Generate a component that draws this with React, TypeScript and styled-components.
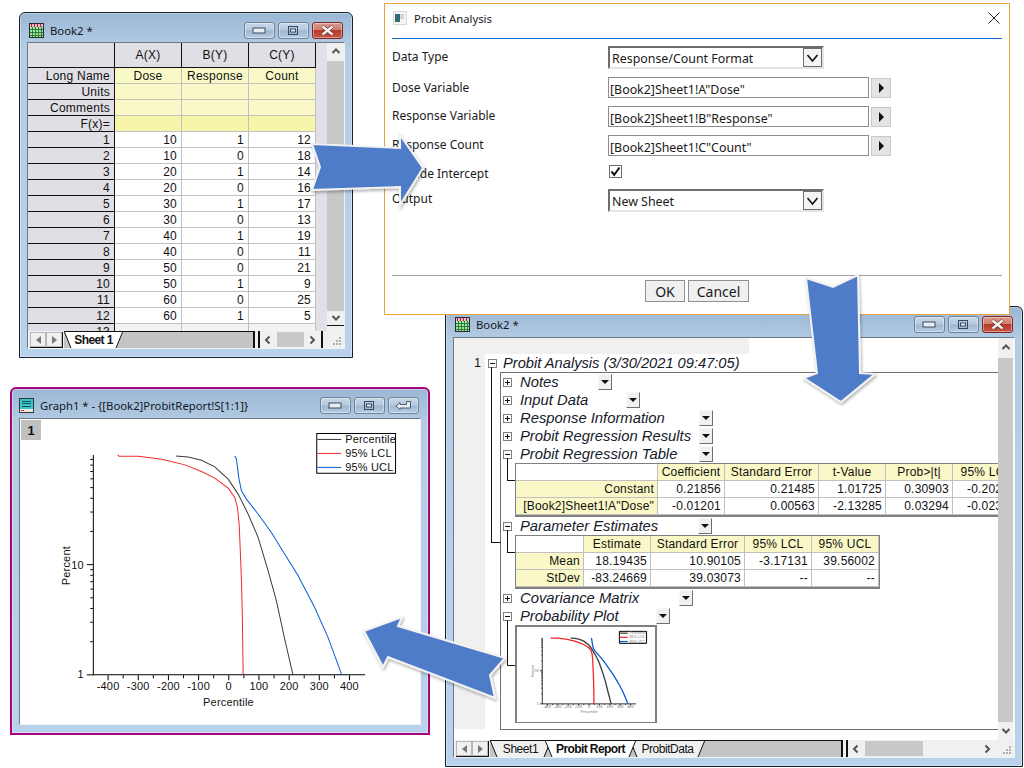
import React from "react";
import styled, { createGlobalStyle, css } from "styled-components";

const SANS = `"Liberation Sans", Arial, sans-serif`;
const UI = `"Noto Sans", "Open Sans", sans-serif`;

const Global = createGlobalStyle`
  html, body { margin: 0; padding: 0; background: #fff; overflow: hidden; }
  #root { width: 1024px; height: 768px; position: relative; overflow: hidden; }
  * { box-sizing: border-box; }
`;

/* ---------- window chrome ---------- */
const Desktop = styled.div`
  position: relative;
  width: 1024px;
  height: 768px;
  background: #fff;
`;
const Win = styled.section<{ $x: number; $y: number; $w: number; $h: number; $edge: string; $bw: number }>`
  position: absolute;
  left: ${(p) => p.$x}px;
  top: ${(p) => p.$y}px;
  width: ${(p) => p.$w}px;
  height: ${(p) => p.$h}px;
  border: ${(p) => p.$bw}px solid ${(p) => p.$edge};
  border-radius: 6px 6px 0 0;
  background: linear-gradient(#9bb7d4 0, #b4cce4 34px, #b9d1ea 100%);
  display: flex;
  flex-direction: column;
  padding: 0 7px 8px;
  box-shadow: inset 0 0 0 1px rgba(255, 255, 255, 0.35);
`;
const TitleBar = styled.header<{ $h: number; $top: number; $left: number }>`
  height: ${(p) => p.$h}px;
  flex: none;
  display: flex;
  align-items: center;
  gap: 6px;
  padding-top: ${(p) => p.$top}px;
  padding-left: ${(p) => p.$left}px;
  color: #10181f;
  font: 11.3px ${UI};
`;
const TitleText = styled.span`
  flex: 1;
  white-space: nowrap;
`;
const WinButtons = styled.div`
  display: flex;
  gap: 3px;
  margin-right: 2px;
`;
const WinBtn = styled.div<{ $close?: boolean }>`
  width: 31px;
  height: 17px;
  border: 1px solid ${(p) => (p.$close ? "#7a2a22" : "#6f8297")};
  border-radius: 3px;
  display: flex;
  align-items: center;
  justify-content: center;
  box-shadow: inset 0 0 0 1px rgba(255, 255, 255, 0.4);
  background: ${(p) =>
    p.$close
      ? "linear-gradient(#d99a8e 0, #cf7e70 45%, #b8382a 50%, #c4584a 100%)"
      : "linear-gradient(#c8d8e8 0, #b4c9de 48%, #9db6d0 52%, #b6cce2 100%)"};
`;
const WinInner = styled.div<{ $bg?: string }>`
  flex: 1;
  min-height: 0;
  display: flex;
  flex-direction: column;
  background: ${(p) => p.$bg ?? "#f0f0f0"};
  border: 1px solid;
  border-color: #6c7a88 #eef3f8 #eef3f8 #6c7a88;
  overflow: hidden;
`;

const MinIcon = () => (
  <svg width="15" height="7" viewBox="0 0 15 7">
    <rect x="1" y="1" width="12" height="5" fill="#e8eef4" stroke="#3c4c5c" />
  </svg>
);
const MaxIcon = () => (
  <svg width="13" height="11" viewBox="0 0 13 11">
    <rect x="1.5" y="1.5" width="9" height="8" fill="none" stroke="#34485c" strokeWidth="1" />
    <rect x="3.5" y="4" width="5" height="3" fill="#e8eef4" stroke="#34485c" strokeWidth="1" />
  </svg>
);
const CloseIcon = () => (
  <svg width="15" height="11" viewBox="0 0 15 11">
    <path d="M2.5 1.5 L12.5 9.5 M12.5 1.5 L2.5 9.5" stroke="#6a2a22" strokeWidth="3.6" />
    <path d="M2.5 1.5 L12.5 9.5 M12.5 1.5 L2.5 9.5" stroke="#f4f4f4" strokeWidth="2.4" />
  </svg>
);
const ReturnIcon = () => (
  <svg width="17" height="11" viewBox="0 0 17 11">
    <path
      d="M1 6 L5 2.5 V4.5 H11.5 V1.5 H15.5 V8 H5 V9.5 Z"
      fill="#e8eef4"
      stroke="#4a5c6e"
      strokeWidth="1"
      strokeLinejoin="round"
    />
  </svg>
);
const BookIcon = () => (
  <svg width="15" height="15" viewBox="0 0 15 15" shapeRendering="crispEdges">
    <rect x="0" y="0" width="15" height="15" fill="#2a2a2a" />
    <rect x="1" y="1" width="13" height="3" fill="#e8b8c8" />
    {[2, 5, 8, 11].map((x) => (
      <rect key={x} x={x} y="1" width="1" height="3" fill="#b0203a" />
    ))}
    <rect x="1" y="4" width="13" height="10" fill="#9fe89f" />
    {[3, 6, 9, 12].map((x) => (
      <rect key={x} x={x} y="4" width="1" height="10" fill="#2f7a3a" />
    ))}
    {[6, 9, 12].map((y) => (
      <rect key={y} x="1" y={y} width="13" height="1" fill="#2f7a3a" />
    ))}
  </svg>
);
const GraphIcon = () => (
  <svg width="15" height="15" viewBox="0 0 15 15" shapeRendering="crispEdges">
    <rect x="0" y="0" width="15" height="15" fill="#33363a" />
    <rect x="1" y="1" width="13" height="10" fill="#38c8c0" />
    <rect x="3" y="3" width="9" height="1" fill="#15506a" />
    <rect x="3" y="5" width="9" height="1" fill="#15506a" />
    <rect x="3" y="8" width="9" height="1" fill="#15506a" />
    <rect x="1" y="11" width="13" height="3" fill="#f0e8e0" />
    <rect x="2" y="12" width="3" height="1" fill="#c83030" />
  </svg>
);

/* ---------- chevrons and scrollbars ---------- */
const Chevron = ({ dir, color = "#555" }: { dir: "up" | "down" | "left" | "right"; color?: string }) => {
  const paths = {
    up: "M1.5 6 L5 2.5 L8.5 6",
    down: "M1.5 3 L5 6.5 L8.5 3",
    left: "M6.5 1.5 L3 5 L6.5 8.5",
    right: "M3.5 1.5 L7 5 L3.5 8.5",
  };
  return (
    <svg width="10" height="10" viewBox="0 0 10 10">
      <path d={paths[dir]} fill="none" stroke={color} strokeWidth="2" />
    </svg>
  );
};
const VScroll = styled.div<{ $w: number }>`
  width: ${(p) => p.$w}px;
  flex: none;
  background: #f0f0f0;
  display: flex;
  flex-direction: column;
  align-items: stretch;
`;
const ScrollEnd = styled.div<{ $h: number }>`
  height: ${(p) => p.$h}px;
  flex: none;
  display: flex;
  align-items: center;
  justify-content: center;
`;
const VThumb = styled.div`
  flex: 1;
  background: #c8c8c8;
`;

/* ---------- sheet tabs ---------- */
const TabBar = styled.div`
  height: 17px;
  flex: none;
  display: flex;
  align-items: stretch;
  background: #f0f0f0;
  font: 12px ${SANS};
  color: #111;
`;
const NavGroup = styled.div`
  flex: none;
  display: flex;
  margin: 1px 1px 0 2px;
  border-right: 1px solid #111;
  border-bottom: 1px solid #111;
`;
const NavBtn = styled.div`
  width: 16px;
  display: flex;
  align-items: center;
  justify-content: center;
  background: #f0f0f0;
  border: 1px solid;
  border-color: #fff #a0a0a0 #a0a0a0 #fff;
  outline: 1px solid #b8b8b8;
  outline-offset: -1px;
`;
const Tri = styled.span<{ $right?: boolean }>`
  width: 0;
  height: 0;
  border-top: 4px solid transparent;
  border-bottom: 4px solid transparent;
  ${(p) => (p.$right ? "border-left: 5px solid #777;" : "border-right: 5px solid #777;")}
`;
const TabStrip = styled.div<{ $end: number }>`
  flex: none;
  width: ${(p) => p.$end}px;
  display: flex;
  background: #c4c4c4;
  border-top: 1px solid #111;
  border-right: 2px solid #111;
`;
const TabItem = styled.div<{ $w: number; $active?: boolean }>`
  position: relative;
  flex: none;
  width: ${(p) => p.$w}px;
  margin-right: -6px;
  display: flex;
  align-items: center;
  justify-content: center;
  font-weight: ${(p) => (p.$active ? 700 : 400)};
  z-index: ${(p) => (p.$active ? 2 : 1)};
  letter-spacing: ${(p) => (p.$active ? "-0.6px" : "-0.45px")};
`;
const TabShape = styled.svg`
  position: absolute;
  inset: 0;
  width: 100%;
  height: 100%;
`;
const TabLabel = styled.span`
  position: relative;
`;
const Tab = ({ w, active, children }: { w: number; active?: boolean; children: React.ReactNode }) => (
  <TabItem $w={w} $active={active}>
    <TabShape viewBox={`0 0 ${w} 16`} preserveAspectRatio="none">
      <path d={`M0 -1 L7 16 H${w - 7} L${w} -1 Z`} fill={active ? "#fff" : "#f0f0f0"} stroke="none" />
      <path d={`M0 -1 L7 16 M${w - 7} 16 L${w} -1`} fill="none" stroke="#111" strokeWidth="1" />
    </TabShape>
    <TabLabel>{children}</TabLabel>
  </TabItem>
);
const HScroll = styled.div<{ $w: number; $closed?: boolean }>`
  flex: none;
  width: ${(p) => p.$w}px;
  margin-left: 3px;
  border-left: 2px solid #111;
  border-right: 2px solid ${(p) => (p.$closed ? "#111" : "transparent")};
  display: flex;
  align-items: center;
  justify-content: space-between;
  padding: 0 4px 0 3px;
`;
const HThumb = styled.div<{ $w: number; $after: number }>`
  width: ${(p) => p.$w}px;
  height: 15px;
  background: #c8c8c8;
  margin-right: ${(p) => p.$after}px;
`;
const Grip = styled.div`
  flex: 1;
  display: flex;
  align-items: flex-end;
  justify-content: flex-end;
  padding: 0 2px 2px 0;
`;
const GripIcon = () => (
  <svg width="10" height="10" viewBox="0 0 10 10" shapeRendering="crispEdges">
    {[
      [7, 1],
      [4, 4],
      [7, 4],
      [1, 7],
      [4, 7],
      [7, 7],
    ].map(([x, y]) => (
      <rect key={`${x}-${y}`} x={x} y={y} width="2" height="2" fill="#b0b0b0" />
    ))}
  </svg>
);

/* ---------- worksheet ---------- */
const SheetRow = styled.div`
  flex: 1;
  min-height: 0;
  display: flex;
`;
const Sheet = styled.div`
  width: 288px;
  flex: none;
  display: grid;
  grid-template-columns: 87px 67px 67px 67px;
  grid-auto-rows: 16px;
  grid-template-rows: 25px;
  overflow: hidden;
  background: #f3f3f3;
  font: 12px ${SANS};
  letter-spacing: 0.25px;
  color: #111;
`;
type Kind = "corner" | "col" | "row" | "meta" | "data";
const kindStyles: Record<Kind, ReturnType<typeof css>> = {
  corner: css`
    background: #dfdfe5;
    border-right: 1px solid #111;
    border-bottom: 1px solid #111;
  `,
  col: css`
    background: #dfdfe5;
    border-right: 1px solid #111;
    border-bottom: 1px solid #111;
    justify-content: center;
  `,
  row: css`
    background: #dfdfe5;
    border-right: 1px solid #111;
    border-bottom: 1px solid #111;
    justify-content: flex-end;
    padding-right: 4px;
  `,
  meta: css`
    border-right: 1px solid #c0c0c0;
    border-bottom: 1px solid #c0c0c0;
    justify-content: center;
  `,
  data: css`
    background: #fff;
    border-right: 1px solid #c0c0c0;
    border-bottom: 1px solid #c0c0c0;
    justify-content: flex-end;
    padding-right: 4px;
  `,
};
const SheetCell = styled.div<{ $kind: Kind; $tint?: string }>`
  display: flex;
  align-items: center;
  white-space: nowrap;
  ${(p) => kindStyles[p.$kind]}
  ${(p) => p.$tint && `background: ${p.$tint};`}
`;
const SheetGutter = styled.div`
  width: 11px;
  flex: none;
  background: #e0e0e6;
`;
const BottomRule = styled.div`
  height: 1px;
  background: #111;
  flex: none;
  margin-bottom: 5px;
`;

const META: [string, string[], string][] = [
  ["Long Name", ["Dose", "Response", "Count"], "#f9f9c8"],
  ["Units", ["", "", ""], "#f9f8c6"],
  ["Comments", ["", "", ""], "#f9f8c6"],
  ["F(x)=", ["", "", ""], "#f7f5a9"],
];
const DATA = [
  [10, 1, 12],
  [10, 0, 18],
  [20, 1, 14],
  [20, 0, 16],
  [30, 1, 17],
  [30, 0, 13],
  [40, 1, 19],
  [40, 0, 11],
  [50, 0, 21],
  [50, 1, 9],
  [60, 0, 25],
  [60, 1, 5],
];

const BookWindow = () => (
  <Win $x={19} $y={12} $w={334} $h={346} $edge="#16222c" $bw={1}>
    <TitleBar $h={29} $top={6} $left={2}>
      <BookIcon />
      <TitleText>Book2 *</TitleText>
      <WinButtons>
        <WinBtn>
          <MinIcon />
        </WinBtn>
        <WinBtn>
          <MaxIcon />
        </WinBtn>
        <WinBtn $close>
          <CloseIcon />
        </WinBtn>
      </WinButtons>
    </TitleBar>
    <WinInner>
      <SheetRow>
        <Sheet>
          <SheetCell $kind="corner" />
          {["A(X)", "B(Y)", "C(Y)"].map((c) => (
            <SheetCell key={c} $kind="col">
              {c}
            </SheetCell>
          ))}
          {META.map(([name, vals, tint]) => (
            <React.Fragment key={name}>
              <SheetCell $kind="row">{name}</SheetCell>
              {vals.map((v, i) => (
                <SheetCell key={i} $kind="meta" $tint={tint}>
                  {v}
                </SheetCell>
              ))}
            </React.Fragment>
          ))}
          {DATA.map((r, i) => (
            <React.Fragment key={i}>
              <SheetCell $kind="row">{i + 1}</SheetCell>
              {r.map((v, j) => (
                <SheetCell key={j} $kind="data">
                  {v}
                </SheetCell>
              ))}
            </React.Fragment>
          ))}
          <SheetCell $kind="row">13</SheetCell>
          {[0, 1, 2].map((j) => (
            <SheetCell key={j} $kind="data" $tint="#f3f3f3" />
          ))}
        </Sheet>
        <SheetGutter />
        <VScroll $w={18}>
          <ScrollEnd $h={18}>
            <Chevron dir="up" />
          </ScrollEnd>
          <VThumb />
          <ScrollEnd $h={14}>
            <Chevron dir="down" />
          </ScrollEnd>
          <BottomRule />
        </VScroll>
      </SheetRow>
      <TabBar>
        <NavGroup>
          <NavBtn>
            <Tri />
          </NavBtn>
          <NavBtn>
            <Tri $right />
          </NavBtn>
        </NavGroup>
        <TabStrip $end={191}>
          <Tab w={59} active>
            Sheet 1
          </Tab>
        </TabStrip>
        <HScroll $w={65} $closed>
          <Chevron dir="left" />
          <HThumb $w={27} $after={0} />
          <Chevron dir="right" />
        </HScroll>
        <Grip>
          <GripIcon />
        </Grip>
      </TabBar>
    </WinInner>
  </Win>
);

/* ---------- plot (shared by the graph window and the thumbnail) ---------- */
const PCT = "523,225 560,228 600,238 640,258 680,295 710,340 740,400 770,470 800,570 825,660 850,775 875,884";
const LCL =
  "348,222 352,226 410,226 480,235 550,252 600,272 640,292 680,322 700,350 708,380 713,430 716,500 720,600 723,720 725,884";
const UCL = "700,225 705,235 712,290 720,330 735,355 770,400 810,455 850,520 890,585 940,680 980,770 1022,884";
const conv = (s: string) =>
  s
    .split(" ")
    .map((p) => {
      const [x, y] = p.split(",").map(Number);
      return `${(x / 3).toFixed(1)},${(380 + y / 3).toFixed(1)}`;
    })
    .join(" ");
const xAt = (v: number) => 227.3 + 0.3025 * v;
const yAt = (d: number) => 674.5 - 110.5 * Math.log10(d);

const Plot = ({ weight }: { weight: number }) => {
  const minorY: number[] = [];
  [1, 10].forEach((m) => [2, 3, 4, 5, 6, 7, 8, 9].forEach((k) => minorY.push(m * k)));
  const ne = { vectorEffect: "non-scaling-stroke" as const };
  const label = {
    fontFamily: SANS,
    fontSize: 11,
    letterSpacing: 0.2,
    fill: weight > 1 ? "#777" : "#111",
  };
  return (
    <>
      <g stroke="#000" strokeWidth={weight > 1 ? 0.8 : 1} fill="none" {...ne}>
        <line x1="91.5" y1="454" x2="91.5" y2="675" {...ne} />
        <line x1="91" y1="674.5" x2="364" y2="674.5" {...ne} />
        {[1, 10].map((d) => (
          <line key={d} x1="85" x2="91" y1={yAt(d)} y2={yAt(d)} {...ne} />
        ))}
        {minorY.map((d) => (
          <line key={d} x1="88.5" x2="91" y1={yAt(d)} y2={yAt(d)} {...ne} />
        ))}
        {[-400, -300, -200, -100, 0, 100, 200, 300, 400].map((v) => (
          <line key={v} y1="675" y2="680" x1={xAt(v)} x2={xAt(v)} {...ne} />
        ))}
        {[-350, -250, -150, -50, 50, 150, 250, 350].map((v) => (
          <line key={v} y1="675" y2="678" x1={xAt(v)} x2={xAt(v)} {...ne} />
        ))}
      </g>
      <g fill="none" strokeWidth={weight}>
        <polyline points={conv(PCT)} stroke="#3c3c3c" {...ne} />
        <polyline points={conv(LCL)} stroke="#f02828" {...ne} />
        <polyline points={conv(UCL)} stroke="#0a5ad8" {...ne} />
      </g>
      <g {...label}>
        {[-400, -300, -200, -100, 0, 100, 200, 300, 400].map((v) => (
          <text key={v} x={xAt(v)} y="689.5" textAnchor="middle">
            {v}
          </text>
        ))}
        <text x="227" y="706" textAnchor="middle">
          Percentile
        </text>
        <text x="82" y="568" textAnchor="end">
          10
        </text>
        <text x="82" y="678" textAnchor="end">
          1
        </text>
        <text transform="translate(68 565) rotate(-90)" textAnchor="middle">
          Percent
        </text>
      </g>
      <rect x="315.5" y="432.5" width="79" height="40" fill="#fff" stroke="#000" strokeWidth={1} {...ne} />
      <g strokeWidth={weight > 1 ? 1.2 : 1}>
        <line x1="316" x2="340" y1="438.5" y2="438.5" stroke="#3c3c3c" {...ne} />
        <line x1="316" x2="340" y1="452.5" y2="452.5" stroke="#f02828" {...ne} />
        <line x1="316" x2="340" y1="466.5" y2="466.5" stroke="#0a5ad8" {...ne} />
      </g>
      <g {...label}>
        <text x="344" y="442">
          Percentile
        </text>
        <text x="344" y="456">
          95% LCL
        </text>
        <text x="344" y="470">
          95% UCL
        </text>
      </g>
    </>
  );
};

const PlotSvg = styled.svg`
  display: block;
  width: 100%;
  height: 100%;
`;
const GraphPage = styled.div`
  position: relative;
  flex: 1;
  background: #fff;
`;
const LayerTag = styled.div`
  position: absolute;
  left: 1px;
  top: 1px;
  width: 20px;
  height: 20px;
  background: #c0c0c0;
  font: 700 13px ${SANS};
  color: #111;
  display: flex;
  align-items: center;
  justify-content: center;
`;

const GraphWindow = () => (
  <Win $x={10} $y={387} $w={420} $h={348} $edge="#a8047e" $bw={2}>
    <TitleBar $h={29} $top={4} $left={0}>
      <GraphIcon />
      <TitleText>Graph1 * - {"{[Book2]ProbitReport!S[1:1]}"}</TitleText>
      <WinButtons>
        <WinBtn>
          <MinIcon />
        </WinBtn>
        <WinBtn>
          <MaxIcon />
        </WinBtn>
        <WinBtn>
          <ReturnIcon />
        </WinBtn>
      </WinButtons>
    </TitleBar>
    <WinInner $bg="#fff">
      <GraphPage>
        <PlotSvg viewBox="18 418 401 307" preserveAspectRatio="none">
          <Plot weight={1} />
        </PlotSvg>
        <LayerTag>1</LayerTag>
      </GraphPage>
    </WinInner>
  </Win>
);

/* ---------- report ---------- */
const ReportMain = styled.div`
  flex: 1;
  min-height: 0;
  display: flex;
  background: #fff;
`;
const ReportArea = styled.div`
  width: 544px;
  flex: none;
  display: flex;
  flex-direction: column;
  overflow: hidden;
`;
const TopStrip = styled.div`
  height: 16px;
  width: 295px;
  flex: none;
  background: #f0f0f0;
`;
const ReportBody = styled.div`
  display: flex;
  flex: none;
`;
const Gutter = styled.div`
  width: 31px;
  height: 375px;
  flex: none;
  background: #f0f0f0;
  font: 12px ${SANS};
  color: #111;
  text-align: right;
  padding: 2px 4px 0 0;
`;
const Tree = styled.div`
  position: relative;
  flex: 1;
  min-width: 0;
  font: italic 14.8px ${SANS};
  color: #16202a;
`;
const RootRow = styled.div`
  height: 18px;
  display: flex;
  align-items: center;
  padding-left: 3px;
  gap: 6px;
  white-space: nowrap;
  font-size: 14.67px;
`;
const ExpBox = styled.span<{ $open?: boolean }>`
  position: relative;
  flex: none;
  width: 9px;
  height: 9px;
  border: 1px solid #808080;
  background: #fff;
  &::before {
    content: "";
    position: absolute;
    left: 1px;
    right: 1px;
    top: 3px;
    height: 1px;
    background: #111;
  }
  ${(p) =>
    !p.$open &&
    css`
      &::after {
        content: "";
        position: absolute;
        top: 1px;
        bottom: 1px;
        left: 3px;
        width: 1px;
        background: #111;
      }
    `}
`;
const Elbow = styled.span<{ $left: number; $top: number; $h: number; $w: number }>`
  position: absolute;
  left: ${(p) => p.$left}px;
  top: ${(p) => p.$top}px;
  width: ${(p) => p.$w}px;
  height: ${(p) => p.$h}px;
  border-left: 1px solid #111;
  border-bottom: 1px solid #111;
`;
const SectionBox = styled.div`
  margin-left: 15px;
  height: 358px;
  border: 1px solid #707070;
  border-right: 0;
  overflow: hidden;
`;
const SectionRow = styled.div`
  height: 18px;
  display: flex;
  align-items: center;
  padding-left: 2px;
  white-space: nowrap;
`;
const SectionTitle = styled.span<{ $w: number }>`
  width: ${(p) => p.$w}px;
  margin-left: 8px;
  flex: none;
`;
const DropBtn = styled.span`
  flex: none;
  width: 14px;
  height: 16px;
  background: #f0f0f0;
  border: 1px solid;
  border-color: #f8f8f8 #707070 #707070 #f8f8f8;
  display: flex;
  align-items: center;
  justify-content: center;
  &::after {
    content: "";
    border-top: 4px solid #111;
    border-left: 4px solid transparent;
    border-right: 4px solid transparent;
  }
`;
const Block = styled.div`
  position: relative;
  margin-left: 14px;
`;
const ReportTable = styled.div<{ $cols: string; $w: number }>`
  width: ${(p) => p.$w}px;
  display: grid;
  grid-template-columns: ${(p) => p.$cols};
  grid-auto-rows: 17px;
  border-style: solid;
  border-color: #808080;
  border-width: 1px 2px 2px 1px;
  font: normal 12px ${SANS};
  letter-spacing: 0.2px;
  color: #111;
  background: #fff;
`;
const RCell = styled.div<{ $kind?: "head" | "side" | "blank" }>`
  display: flex;
  align-items: center;
  justify-content: ${(p) => (p.$kind === "head" ? "center" : "flex-end")};
  padding: 0 3px;
  white-space: nowrap;
  overflow: hidden;
  border-right: 1px solid #c0c0c0;
  border-bottom: 1px solid #c0c0c0;
  background: ${(p) => (p.$kind === "head" || p.$kind === "side" ? "#f9f8c6" : "#fff")};
`;
const ThumbFrame = styled.div`
  width: 142px;
  height: 98px;
  border: 2px solid #808080;
  border-bottom-width: 1px;
  background: #fff;
  padding-bottom: 3px;
`;

const ROWS: { t: string; w: number; open?: boolean }[] = [
  { t: "Notes", w: 78 },
  { t: "Input Data", w: 106 },
  { t: "Response Information", w: 179 },
  { t: "Probit Regression Results", w: 179 },
];
const Section = ({ t, w, open }: { t: string; w: number; open?: boolean }) => (
  <SectionRow>
    <ExpBox $open={open} />
    <SectionTitle $w={w}>{t}</SectionTitle>
    <DropBtn />
  </SectionRow>
);

const T1 = [
  ["blank", "Coefficient", "Standard Error", "t-Value", "Prob>|t|", "95% LCL"],
  ["Constant", "0.21856", "0.21485", "1.01725", "0.30903", "-0.20253"],
  ['[Book2]Sheet1!A"Dose"', "-0.01201", "0.00563", "-2.13285", "0.03294", "-0.02305"],
];
const T2 = [
  ["blank", "Estimate", "Standard Error", "95% LCL", "95% UCL"],
  ["Mean", "18.19435", "10.90105", "-3.17131", "39.56002"],
  ["StDev", "-83.24669", "39.03073", "--", "--"],
];
const DataTable = ({ rows, cols, w }: { rows: string[][]; cols: string; w: number }) => (
  <ReportTable $cols={cols} $w={w}>
    {rows.map((r, i) =>
      r.map((c, j) => {
        if (i === 0) return <RCell key={j} $kind={j === 0 ? "blank" : "head"}>{j === 0 ? "" : c}</RCell>;
        return (
          <RCell key={j} $kind={j === 0 ? "side" : undefined}>
            {c}
          </RCell>
        );
      }),
    )}
  </ReportTable>
);

const ReportWindow = () => (
  <Win $x={445} $y={306} $w={578} $h={461} $edge="#10202c" $bw={1}>
    <TitleBar $h={30} $top={5} $left={2}>
      <BookIcon />
      <TitleText>Book2 *</TitleText>
      <WinButtons>
        <WinBtn>
          <MinIcon />
        </WinBtn>
        <WinBtn>
          <MaxIcon />
        </WinBtn>
        <WinBtn $close>
          <CloseIcon />
        </WinBtn>
      </WinButtons>
    </TitleBar>
    <WinInner $bg="#fff">
      <ReportMain>
        <ReportArea>
          <TopStrip />
          <ReportBody>
            <Gutter>1</Gutter>
            <Tree>
              <RootRow>
                <ExpBox $open />
                <span>Probit Analysis (3/30/2021 09:47:05)</span>
              </RootRow>
              <Elbow $left={6} $top={13} $h={176} $w={10} />
              <SectionBox>
                {ROWS.map((r) => (
                  <Section key={r.t} {...r} />
                ))}
                <Section t="Probit Regression Table" w={179} open />
                <Block>
                  <Elbow $left={-8} $top={-5} $h={23} $w={8} />
                  <DataTable rows={T1} cols="142px 67px 94px 67px 67px 67px" w={500} />
                </Block>
                <Section t="Parameter Estimates" w={178} open />
                <Block>
                  <Elbow $left={-8} $top={-5} $h={23} $w={8} />
                  <DataTable rows={T2} cols="68px 67px 94px 67px 67px" w={365} />
                </Block>
                <Section t="Covariance Matrix" w={159} />
                <Section t="Probability Plot" w={136} open />
                <Block>
                  <Elbow $left={-8} $top={-5} $h={46} $w={8} />
                  <ThumbFrame>
                    <PlotSvg viewBox="18 418 401 307" preserveAspectRatio="none">
                      <Plot weight={1.3} />
                    </PlotSvg>
                  </ThumbFrame>
                </Block>
              </SectionBox>
            </Tree>
          </ReportBody>
        </ReportArea>
        <VScroll $w={15}>
          <ScrollEnd $h={20}>
            <Chevron dir="up" />
          </ScrollEnd>
          <VThumb />
          <ScrollEnd $h={18}>
            <Chevron dir="down" />
          </ScrollEnd>
        </VScroll>
      </ReportMain>
      <TabBar>
        <NavGroup>
          <NavBtn>
            <Tri />
          </NavBtn>
          <NavBtn>
            <Tri $right />
          </NavBtn>
        </NavGroup>
        <TabStrip $end={353}>
          <Tab w={61}>Sheet1</Tab>
          <Tab w={91} active>
            Probit Report
          </Tab>
          <Tab w={75}>ProbitData</Tab>
        </TabStrip>
        <HScroll $w={152}>
          <Chevron dir="left" />
          <HThumb $w={58} $after={56} />
          <Chevron dir="right" />
        </HScroll>
        <Grip>
          <GripIcon />
        </Grip>
      </TabBar>
    </WinInner>
  </Win>
);

/* ---------- dialog ---------- */
const Dialog = styled.section`
  position: absolute;
  left: 384px;
  top: 3px;
  width: 626px;
  height: 312px;
  background: #fff;
  border: 1px solid #e8a33d;
  padding: 0 7px;
  display: flex;
  flex-direction: column;
  font: 12px ${UI};
  color: #1a1a1a;
`;
const DialogHead = styled.header`
  height: 35px;
  flex: none;
  display: flex;
  align-items: center;
  gap: 7px;
  padding: 0 2px 6px 1px;
  border-bottom: 1px solid #0a6cd0;
`;
const DialogTitle = styled.span`
  flex: 1;
  font-size: 11.3px;
`;
const Form = styled.div`
  flex: 1;
  display: flex;
  flex-direction: column;
  gap: 8px;
  padding-top: 7px;
`;
const Field = styled.div<{ $h: number; $extra?: number }>`
  height: ${(p) => p.$h}px;
  margin-top: ${(p) => p.$extra ?? 0}px;
  display: grid;
  grid-template-columns: 216px auto 1fr;
  grid-template-rows: 100%;
  align-items: center;
`;
const FieldLabel = styled.label<{ $lift: number }>`
  margin-top: ${(p) => -2 * p.$lift}px;
`;
const Combo = styled.div`
  width: 216px;
  height: 100%;
  border: 2px solid;
  border-color: #6e6e6e #e4e4e4 #e4e4e4 #6e6e6e;
  display: flex;
  align-items: center;
  justify-content: space-between;
  padding-left: 2px;
  font-size: 12.4px;
`;
const ComboText = styled.span`
  padding-top: 2px;
`;
const ComboArrow = styled.span`
  width: 19px;
  height: 19px;
  border: 1px solid #6e6e6e;
  background: #f4f4f4;
  display: flex;
  align-items: center;
  justify-content: center;
`;
const TextBox = styled.div`
  width: 261px;
  height: 100%;
  border: 1px solid #8c8c8c;
  display: flex;
  align-items: center;
  padding: 3px 0 0 1px;
  white-space: nowrap;
  font-size: 12.4px;
`;
const PickBtn = styled.div`
  width: 20px;
  height: 20px;
  margin-left: 2px;
  background: #e4e4e4;
  border: 1px solid #c8c8c8;
  display: flex;
  align-items: center;
  justify-content: center;
  &::after {
    content: "";
    border-left: 5px solid #111;
    border-top: 5px solid transparent;
    border-bottom: 5px solid transparent;
  }
`;
const Check = styled.div`
  width: 13px;
  height: 13px;
  margin-left: 1px;
  border: 1px solid #6e6e6e;
  display: flex;
  align-items: center;
  justify-content: center;
`;
const DialogFoot = styled.footer`
  height: 39px;
  flex: none;
  border-top: 1px solid #a0a0a0;
  display: flex;
  justify-content: center;
  gap: 3px;
  padding-top: 4px;
`;
const DlgButton = styled.div<{ $w: number }>`
  width: ${(p) => p.$w}px;
  height: 22px;
  background: #f0f0f0;
  border: 1px solid #909090;
  font-size: 14px;
  display: flex;
  align-items: center;
  justify-content: center;
`;

const ComboChevron = () => (
  <svg width="13" height="10" viewBox="0 0 13 10">
    <path d="M1.5 2 L6.5 8 L11.5 2" fill="none" stroke="#111" strokeWidth="1.6" />
  </svg>
);

const ProbitDialog = () => (
  <Dialog>
    <DialogHead>
      <svg width="14" height="14" viewBox="0 0 14 14" shapeRendering="crispEdges">
        <rect width="14" height="14" fill="#d8d8d8" />
        <rect x="1" y="1" width="12" height="12" fill="#f4f4f4" />
        <rect x="2" y="3" width="5" height="8" fill="#2f6f72" />
        <rect x="7" y="3" width="4" height="5" fill="#cfd4d8" />
      </svg>
      <DialogTitle>Probit Analysis</DialogTitle>
      <svg width="12" height="12" viewBox="0 0 12 12">
        <path d="M0.5 0.5 L11.5 11.5 M11.5 0.5 L0.5 11.5" stroke="#222" strokeWidth="1" />
      </svg>
    </DialogHead>
    <Form>
      <Field $h={23}>
        <FieldLabel $lift={1.5}>Data Type</FieldLabel>
        <Combo>
          <ComboText>Response/Count Format</ComboText>
          <ComboArrow>
            <ComboChevron />
          </ComboArrow>
        </Combo>
      </Field>
      <Field $h={21}>
        <FieldLabel $lift={0.5}>Dose Variable</FieldLabel>
        <TextBox>[Book2]Sheet1!A"Dose"</TextBox>
        <PickBtn />
      </Field>
      <Field $h={21}>
        <FieldLabel $lift={1}>Response Variable</FieldLabel>
        <TextBox>[Book2]Sheet1!B"Response"</TextBox>
        <PickBtn />
      </Field>
      <Field $h={21}>
        <FieldLabel $lift={1}>Response Count</FieldLabel>
        <TextBox>[Book2]Sheet1!C"Count"</TextBox>
        <PickBtn />
      </Field>
      <Field $h={13} $extra={1}>
        <FieldLabel $lift={-2}>Include Intercept</FieldLabel>
        <Check>
          <svg width="11" height="11" viewBox="0 0 11 11">
            <path d="M1.5 5.5 L4.2 8.8 L9.5 1.5" fill="none" stroke="#111" strokeWidth="2" />
          </svg>
        </Check>
      </Field>
      <Field $h={23} $extra={3}>
        <FieldLabel $lift={2}>Output</FieldLabel>
        <Combo>
          <ComboText>New Sheet</ComboText>
          <ComboArrow>
            <ComboChevron />
          </ComboArrow>
        </Combo>
      </Field>
    </Form>
    <DialogFoot>
      <DlgButton $w={40}>OK</DlgButton>
      <DlgButton $w={61}>Cancel</DlgButton>
    </DialogFoot>
  </Dialog>
);

/* ---------- flow arrows ---------- */
const ArrowLayer = styled.svg`
  position: absolute;
  left: 0;
  top: 0;
  width: 1024px;
  height: 768px;
  pointer-events: none;
  overflow: visible;
`;
const ARROWS = [
  "312,144 320,167 312,190 400,187 400,205 423,168 400,135 400,148",
  "806,278 833,287 858,275 860,373 875,374 841,402 804,378 817,373",
  "505,658 490,675 495,698 388,657 383,667 364,631 402,617 398,626",
];
const Arrows = () => (
  <ArrowLayer viewBox="0 0 1024 768">
    <defs>
      <filter id="arrowShadow" x="-20%" y="-20%" width="140%" height="140%">
        <feDropShadow dx="1" dy="2" stdDeviation="1.5" floodColor="#000" floodOpacity="0.3" />
      </filter>
    </defs>
    {ARROWS.map((p) => (
      <polygon
        key={p}
        points={p}
        fill="#4f7bc8"
        stroke="#f2f2f2"
        strokeWidth="2"
        strokeLinejoin="miter"
        filter="url(#arrowShadow)"
      />
    ))}
  </ArrowLayer>
);

export default function App() {
  return (
    <Desktop>
      <Global />
      <BookWindow />
      <GraphWindow />
      <ReportWindow />
      <ProbitDialog />
      <Arrows />
    </Desktop>
  );
}
